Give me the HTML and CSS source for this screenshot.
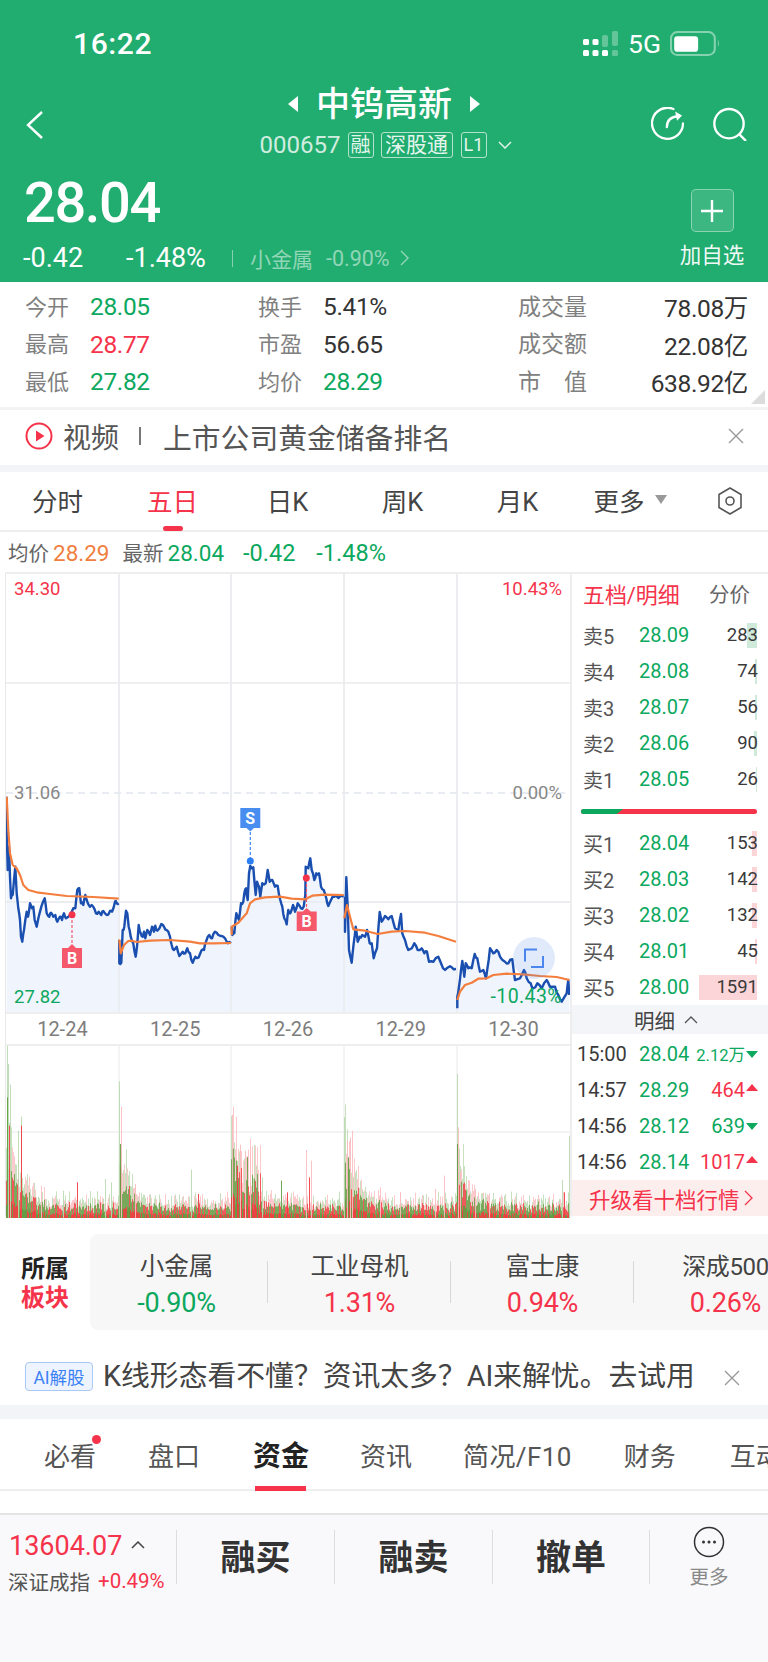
FILE: index.html
```html
<!DOCTYPE html>
<html lang="zh-CN">
<head>
<meta charset="utf-8">
<title>中钨高新</title>
<link rel="stylesheet" href="styles.css">
</head>
<body>
<div class="page">
  <header class="header">
    <div class="status">
      <span class="clock">16:22</span>
      <div class="status-right">
        <svg class="signal" viewBox="0 0 36 26" width="36" height="26">
          <g class="sig-on">
            <rect x="0" y="8" width="6" height="6" rx="1.5"/><rect x="9.5" y="8" width="6" height="6" rx="1.5"/>
            <rect x="0" y="19" width="6" height="6" rx="1.5"/><rect x="9.5" y="19" width="6" height="6" rx="1.5"/><rect x="19" y="19" width="6" height="6" rx="1.5"/>
          </g>
          <g class="sig-off">
            <rect x="19" y="4" width="6" height="12" rx="2"/><rect x="29" y="0" width="6" height="15" rx="2"/><rect x="29" y="19" width="6" height="6" rx="1.5"/>
          </g>
        </svg>
        <span class="net">5G</span>
        <svg class="battery" viewBox="0 0 48 24" width="48" height="24">
          <rect class="bat-shell" x="1" y="1" width="42" height="22" rx="6"/>
          <rect class="bat-fill" x="4" y="5" width="23" height="15" rx="3"/>
          <path class="bat-cap" d="M46 8.5 Q48 12 46 15.5Z"/>
        </svg>
      </div>
    </div>
    <div class="nav">
      <svg class="back" viewBox="0 0 18 28" width="18" height="28"><path d="M16 1 L2 14 L16 27"/></svg>
      <div class="nav-mid">
        <div class="title"><span class="tri-l"></span><span class="name">中钨高新</span><span class="tri-r"></span></div>
        <div class="code">
          <span class="code-num">000657</span>
          <span class="tag">融</span><span class="tag tag-wide">深股通</span><span class="tag tag-l1">L1</span>
          <svg class="code-chev" viewBox="0 0 14 8" width="14" height="8"><path d="M1 1 L7 7 L13 1"/></svg>
        </div>
      </div>
      <div class="nav-icons">
        <svg class="ic" viewBox="272 262 100 100" width="33" height="33"><path d="M340 268 A47 47 0 1 0 369 312"/><path d="M320 323 Q320 292 356 290"/><path class="ic-head" d="M345 276 L366 288 L351 304Z"/></svg>
        <svg class="ic" viewBox="455 262 102 102" width="34" height="34"><circle cx="503" cy="312" r="44"/><path d="M535 345 L552 362"/></svg>
      </div>
    </div>
    <div class="quote">
      <div class="quote-left">
        <div class="price">28.04</div>
        <div class="delta">
          <span class="d1">-0.42</span><span class="d2">-1.48%</span><i class="d-sep"></i>
          <span class="sector-n">小金属</span><span class="sector-v">-0.90%</span>
          <svg class="d-chev" viewBox="0 0 9 16" width="9" height="16"><path d="M1 1 L8 8 L1 15"/></svg>
        </div>
      </div>
      <div class="add">
        <div class="add-btn"><svg viewBox="0 0 24 24" width="24" height="24"><path d="M12 1 V23 M1 12 H23"/></svg></div>
        <span class="add-t">加自选</span>
      </div>
    </div>
  </header>

  <section class="stats">
    <div class="st-col st-c1">
      <div class="st-row"><span class="st-l">今开</span><span class="st-v green">28.05</span></div>
      <div class="st-row"><span class="st-l">最高</span><span class="st-v red">28.77</span></div>
      <div class="st-row"><span class="st-l">最低</span><span class="st-v green">27.82</span></div>
    </div>
    <div class="st-col st-c2">
      <div class="st-row"><span class="st-l">换手</span><span class="st-v">5.41%</span></div>
      <div class="st-row"><span class="st-l">市盈</span><span class="st-v">56.65</span></div>
      <div class="st-row"><span class="st-l">均价</span><span class="st-v green">28.29</span></div>
    </div>
    <div class="st-col st-c3">
      <div class="st-row st-between"><span class="st-l">成交量</span><span class="st-v">78.08万</span></div>
      <div class="st-row st-between"><span class="st-l">成交额</span><span class="st-v">22.08亿</span></div>
      <div class="st-row st-between"><span class="st-l st-just">市 值</span><span class="st-v">638.92亿</span></div>
    </div>
    <i class="corner"></i>
  </section>

  <section class="video">
    <svg class="play" viewBox="0 0 28 28" width="28" height="28"><circle cx="14" cy="14" r="12.5"/><path d="M11 8.5 L19.5 14 L11 19.5Z"/></svg>
    <span class="vid-a">视频</span><i class="vid-sep"></i><span class="vid-b">上市公司黄金储备排名</span>
    <svg class="close" viewBox="0 0 16 16" width="16" height="16"><path d="M1 1 L15 15 M15 1 L1 15"/></svg>
  </section>
  <div class="band band-a"></div>

  <nav class="tabs">
    <span class="tab">分时</span>
    <span class="tab tab-on">五日</span>
    <span class="tab">日K</span>
    <span class="tab">周K</span>
    <span class="tab">月K</span>
    <span class="tab tab-more">更多<i class="caret"></i></span>
    <svg class="hex" viewBox="0 0 26 28" width="26" height="28"><path d="M13 1 L24 7.500 V20.500 L13 27 L2 20.500 V7.500Z"/><circle cx="13" cy="14" r="4"/></svg>
  </nav>

  <div class="info">
    <span class="lab">均价</span><span class="val orange">28.29</span>
    <span class="lab lab-2">最新</span><span class="val green">28.04</span>
    <span class="val green v-3">-0.42</span><span class="val green v-4">-1.48%</span>
  </div>

  <section class="board">
    <div class="charts">
      <div class="price-chart">
        <svg id="price-svg" class="chart-svg" viewBox="6 573 564 439" width="564" height="439">
          <g class="grid">
            <path d="M119 573 V1012 M231 573 V1012 M344 573 V1012 M457 573 V1012 M6 683 H570 M6 902 H570"/>
          </g>
          <path class="zero" d="M6 793 H570"/>
          <g id="price-layer"></g>
          <path class="dash dash-r" d="M72 915 V945"/>
          <path class="flag-r" d="M62 948 H68 L72 944 L76 948 H82 V968 H62Z"/>
          <circle class="dot-r" cx="72" cy="914.700" r="3.500"/>
          <text class="flag-t" x="72" y="964">B</text>
          <path class="dash dash-b" d="M250.300 832 V861"/>
          <path class="flag-b" d="M240.300 808 H260.300 V828 H254 L250.300 831.500 L246.500 828 H240.300Z"/>
          <circle class="dot-b" cx="250.300" cy="861" r="3.500"/>
          <text class="flag-t" x="250.300" y="824">S</text>
          <path class="dash dash-r" d="M306.500 879 V908"/>
          <path class="flag-r" d="M296.700 911.500 H302.700 L306.700 908 L310.700 911.500 H316.700 V931 H296.700Z"/>
          <circle class="dot-r" cx="306.300" cy="878" r="3.500"/>
          <text class="flag-t" x="306.700" y="927">B</text>
          <circle class="expand" cx="534" cy="958" r="21"/>
          <path class="expand-i" d="M525 961.500 V949.500 H537 M543 956 V967 H531"/>
        </svg>
        <span class="ax ax-tl red">34.30</span>
        <span class="ax ax-tr red">10.43%</span>
        <span class="ax ax-ml grey">31.06</span>
        <span class="ax ax-mr grey">0.00%</span>
        <span class="ax ax-bl green">27.82</span>
        <span class="ax ax-br green">-10.43%</span>
      </div>
      <div class="dates">
        <span>12-24</span><span>12-25</span><span>12-26</span><span>12-29</span><span>12-30</span>
      </div>
      <svg id="vol-svg" class="vol-svg" viewBox="6 1045 564 172" width="564" height="172">
        <path class="grid-line" d="M119 1045 V1217 M231 1045 V1217 M344 1045 V1217 M457 1045 V1217 M6 1131 H570"/>
        <g id="vol-layer"></g>
      </svg>
    </div>

    <aside class="book">
      <div class="book-head"><span class="book-title">五档/明细</span><span class="book-alt">分价</span></div>
      <div class="b-row"><span class="b-l">卖5</span><span class="b-p">28.09</span><span class="b-q">283</span><i class="b-bar bar-g" style="width:10px"></i></div>
      <div class="b-row"><span class="b-l">卖4</span><span class="b-p">28.08</span><span class="b-q">74</span><i class="b-bar bar-g" style="width:2px"></i></div>
      <div class="b-row"><span class="b-l">卖3</span><span class="b-p">28.07</span><span class="b-q">56</span><i class="b-bar bar-g" style="width:2px"></i></div>
      <div class="b-row"><span class="b-l">卖2</span><span class="b-p">28.06</span><span class="b-q">90</span><i class="b-bar bar-g" style="width:3px"></i></div>
      <div class="b-row"><span class="b-l">卖1</span><span class="b-p">28.05</span><span class="b-q">26</span><i class="b-bar bar-g" style="width:1px"></i></div>
      <div class="ratio"><i class="ratio-g"></i><i class="ratio-r"></i></div>
      <div class="b-row"><span class="b-l">买1</span><span class="b-p">28.04</span><span class="b-q">153</span><i class="b-bar bar-r" style="width:5px"></i></div>
      <div class="b-row"><span class="b-l">买2</span><span class="b-p">28.03</span><span class="b-q">142</span><i class="b-bar bar-r" style="width:5px"></i></div>
      <div class="b-row"><span class="b-l">买3</span><span class="b-p">28.02</span><span class="b-q">132</span><i class="b-bar bar-r" style="width:5px"></i></div>
      <div class="b-row"><span class="b-l">买4</span><span class="b-p">28.01</span><span class="b-q">45</span><i class="b-bar bar-r" style="width:2px"></i></div>
      <div class="b-row"><span class="b-l">买5</span><span class="b-p">28.00</span><span class="b-q">1591</span><i class="b-bar bar-r" style="width:58px"></i></div>
      <div class="detail-head">明细<svg viewBox="0 0 14 8" width="14" height="8"><path d="M1 7 L7 1 L13 7"/></svg></div>
      <div class="details">
        <div class="d-row"><span class="d-t">15:00</span><span class="d-p">28.04</span><span class="d-q green small">2.12万</span><i class="t-dn"></i></div>
        <div class="d-row"><span class="d-t">14:57</span><span class="d-p">28.29</span><span class="d-q red">464</span><i class="t-up"></i></div>
        <div class="d-row"><span class="d-t">14:56</span><span class="d-p">28.12</span><span class="d-q green">639</span><i class="t-dn"></i></div>
        <div class="d-row"><span class="d-t">14:56</span><span class="d-p">28.14</span><span class="d-q red">1017</span><i class="t-up"></i></div>
      </div>
      <div class="upgrade">升级看十档行情<svg viewBox="0 0 9 16" width="9" height="16"><path d="M1 1 L8 8 L1 15"/></svg></div>
    </aside>
  </section>

  <section class="sectors">
    <div class="sec-title"><span>所属</span><span class="red">板块</span></div>
    <div class="sec-card">
      <div class="sec-item"><span class="sec-n">小金属</span><span class="sec-v green">-0.90%</span></div>
      <div class="sec-item"><span class="sec-n">工业母机</span><span class="sec-v red">1.31%</span></div>
      <div class="sec-item"><span class="sec-n">富士康</span><span class="sec-v red">0.94%</span></div>
      <div class="sec-item sec-last"><span class="sec-n">深成500</span><span class="sec-v red">0.26%</span></div>
    </div>
  </section>

  <section class="ai">
    <span class="ai-badge">AI解股</span>
    <span class="ai-text">K线形态看不懂？资讯太多？AI来解忧。去试用</span>
    <svg class="close" viewBox="0 0 16 16" width="16" height="16"><path d="M1 1 L15 15 M15 1 L1 15"/></svg>
  </section>
  <div class="band band-b"></div>

  <nav class="subtabs">
    <span class="st st-1">必看<i class="st-dot"></i></span>
    <span class="st st-2">盘口</span>
    <span class="st st-3 st-on">资金</span>
    <span class="st st-4">资讯</span>
    <span class="st st-5">简况/F10</span>
    <span class="st st-6">财务</span>
    <span class="st st-7">互动</span>
  </nav>
  <div class="spacer"></div>

  <footer class="foot">
    <div class="idx">
      <div class="idx-top"><span class="idx-num">13604.07</span><svg viewBox="0 0 14 8" width="14" height="8"><path d="M1 7 L7 1 L13 7"/></svg></div>
      <div class="idx-sub"><span class="idx-name">深证成指</span><span class="idx-pct">+0.49%</span></div>
    </div>
    <span class="act">融买</span>
    <span class="act">融卖</span>
    <span class="act">撤单</span>
    <div class="more">
      <svg viewBox="0 0 32 32" width="32" height="32"><circle class="more-c" cx="16" cy="16" r="14.500"/><circle class="more-d" cx="10.500" cy="16" r="1.500"/><circle class="more-d" cx="16" cy="16" r="1.500"/><circle class="more-d" cx="21.500" cy="16" r="1.500"/></svg>
      <span>更多</span>
    </div>
  </footer>
</div>
<script src="script.js"></script>
</body>
</html>
```
FILE: styles.css
```css
* { box-sizing: border-box; margin: 0; padding: 0; }
html, body { background: #fff; }
body { width: 768px; height: 1662px; overflow: hidden; font-family: Roboto, "Noto Sans CJK SC", sans-serif; color: #333; }
i { display: block; font-style: normal; }
svg { display: block; }
.page { width: 768px; height: 1662px; overflow: hidden; display: flex; flex-direction: column; }
.green { color: #0ba85e; }
.red { color: #f5334a; }
.grey { color: #888; }
.orange { color: #f07f3f; }

/* header */
.header { height: 282px; background: #22ad70; color: #fff; flex: none; }
.status { height: 86px; display: flex; justify-content: space-between; align-items: center; padding: 0 48px 0 73px; }
.clock { font-size: 30px; font-weight: 500; letter-spacing: 0.6px; }
.status-right { display: flex; align-items: center; }
.signal { margin-right: 9px; margin-top: 2px; }
.sig-on { fill: #fff; }
.sig-off { fill: rgba(255,255,255,.3); }
.net { font-size: 26.500px; width: 42px; }
.battery { margin-top: 1px; width: 50px; height: 25px; }
.bat-shell { fill: none; stroke: rgba(255,255,255,.45); stroke-width: 2; }
.bat-fill { fill: #fff; }
.bat-cap { fill: rgba(255,255,255,.45); }

.nav { height: 84px; display: grid; grid-template-columns: 1fr auto 1fr; align-items: start; }
.back { margin: 25px 0 0 26px; fill: none; stroke: #fff; stroke-width: 2.4; }
.nav-mid { display: flex; flex-direction: column; align-items: center; }
.title { display: flex; align-items: center; height: 32px; margin-top: 2px; }
.name { font-size: 34px; font-weight: 500; line-height: 32px; margin: 0 18px; }
.tri-l { width: 0; height: 0; border-style: solid; border-width: 8px 10px 8px 0; border-color: transparent #fff transparent transparent; }
.tri-r { width: 0; height: 0; border-style: solid; border-width: 8px 0 8px 10px; border-color: transparent transparent transparent #fff; }
.code { display: flex; align-items: center; height: 26px; margin-top: 12px; color: rgba(255,255,255,.8); margin-left: 3px; }
.code-num { font-size: 24px; width: 88px; }
.tag { border: 1px solid rgba(255,255,255,.65); border-radius: 3px; height: 26px; width: 26px; display: flex; align-items: center; justify-content: center; font-size: 20px; line-height: 1; white-space: nowrap; margin-right: 7px; color: rgba(255,255,255,.9); }
.tag-wide { width: 72px; font-size: 21px; margin-right: 8px; }
.tag-l1 { font-size: 18px; margin-right: 11px; }
.code-chev { fill: none; stroke: rgba(255,255,255,.85); stroke-width: 1.5; }
.nav-icons { display: flex; justify-content: flex-end; gap: 29px; padding: 21px 21px 0 0; }
.ic { fill: none; stroke: #fff; stroke-width: 7; stroke-linecap: round; }
.ic-head { fill: #fff; stroke: none; }

.quote { height: 112px; display: flex; justify-content: space-between; padding: 0 23px 0 23px; }
.price { font-size: 56px; font-weight: 500; line-height: 66px; margin-left: 1px; letter-spacing: -1.4px; }
.delta { display: flex; align-items: center; height: 38px; margin-top: 3px; }
.d1 { font-size: 27px; width: 103px; }
.d2 { font-size: 27px; width: 106px; }
.d-sep { width: 1px; height: 17px; background: rgba(255,255,255,.45); margin-right: 17px; }
.sector-n { font-size: 21px; width: 76px; color: rgba(255,255,255,.5); }
.sector-v { font-size: 21.500px; width: 74px; color: rgba(255,255,255,.5); }
.d-chev { fill: none; stroke: rgba(255,255,255,.5); stroke-width: 1.4; }
.add { display: flex; flex-direction: column; align-items: center; width: 66px; margin-top: 19px; }
.add-btn { width: 43px; height: 43px; border: 1px solid rgba(255,255,255,.4); border-radius: 5px; background: rgba(255,255,255,.12); display: flex; align-items: center; justify-content: center; }
.add-btn path { stroke: #fff; stroke-width: 2.4; }
.add-t { font-size: 21.500px; line-height: 26px; margin-top: 11px; white-space: nowrap; color: rgba(255,255,255,.95); }

/* stats */
.stats { height: 125px; flex: none; display: flex; padding: 6px 0 0 25px; position: relative; }
.st-col { display: flex; flex-direction: column; }
.st-c1 { width: 233px; }
.st-c2 { width: 260px; }
.st-c3 { width: 230px; }
.st-row { height: 37.500px; display: flex; align-items: center; }
.st-between { justify-content: space-between; }
.st-l { font-size: 22px; color: #808080; width: 65px; white-space: nowrap; padding-bottom: 4px; }
.st-c3 .st-l { font-size: 23px; width: 69px; }
.st-just { text-align-last: justify; }
.st-v { font-size: 24.500px; letter-spacing: -0.35px; white-space: nowrap; }
.corner { position: absolute; right: 3px; bottom: 3px; width: 0; height: 0; border-style: solid; border-width: 0 0 14px 14px; border-color: transparent transparent #dcdcdc transparent; }

.video { height: 58px; flex: none; border-top: 3px solid #f3f3f3; display: flex; align-items: center; padding: 0 24px 3px 25px; }
.play { fill: none; stroke: #f5334a; stroke-width: 2; }
.play path { fill: #f5334a; stroke: none; }
.vid-a { font-size: 28px; color: #555; margin-left: 10px; white-space: nowrap; }
.vid-sep { width: 2px; height: 18px; background: #777; margin: 0 22px 0 20px; }
.vid-b { font-size: 28.800px; color: #555; white-space: nowrap; flex: 1; }
.close { fill: none; stroke: #999; stroke-width: 1.4; flex: none; }
.band { background: #f3f4f8; flex: none; }
.band-a { height: 7px; }
.band-b { height: 14px; }

.tabs { height: 60px; flex: none; display: flex; align-items: center; border-bottom: 2px solid #eee; }
.tab { width: 115px; font-size: 25.500px; color: #444; display: flex; justify-content: center; align-items: center; position: relative; height: 100%; white-space: nowrap; padding-bottom: 3px; }
.tab-on { color: #f5334a; }
.tab-on::after { content: ""; position: absolute; left: 48px; bottom: -1px; width: 20px; height: 5px; border-radius: 3px; background: #f5334a; }
.tab-more { padding-right: 5px; }
.caret { width: 0; height: 0; border-style: solid; border-width: 9px 6.500px 0 6.500px; border-color: #999 transparent transparent transparent; margin-left: 10px; }
.hex { margin-left: 27px; fill: none; stroke: #555; stroke-width: 1.6; stroke-linejoin: round; }

.info { height: 41px; flex: none; display: flex; align-items: center; padding-left: 8px; }
.lab { font-size: 20.500px; color: #666; white-space: nowrap; padding-bottom: 2px; }
.lab-2 { margin-left: 13px; }
.val { font-size: 22.500px; margin-left: 4px; white-space: nowrap; }
.v-3 { margin-left: 19px; font-size: 23.500px; }
.v-4 { margin-left: 21px; font-size: 23.500px; }

/* board */
.board { height: 644px; flex: none; display: flex; border-top: 2px solid #eee; margin-top: -1px; margin-left: 5px; }
.charts { width: 565px; flex: none; border-left: 1px solid #e8e8e8; }
.price-chart { position: relative; width: 564px; height: 438px; overflow: hidden; }
.chart-svg { margin-top: -1px; }
.grid { fill: none; stroke: #ececec; stroke-width: 1.5; }
.grid-line { fill: none; stroke: #e8e8e8; stroke-width: 1; }
.zero { fill: none; stroke: #d2dae6; stroke-width: 1; stroke-dasharray: 7 5; }
.area { fill: #eff4fd; stroke: none; }
.p-line { fill: none; stroke: #1a4fb0; stroke-width: 2.400; stroke-linejoin: round; }
.a-line { fill: none; stroke: #f47e3e; stroke-width: 2.200; stroke-linejoin: round; }
.dash { stroke-width: 1.2; stroke-dasharray: 3 2; fill: none; }
.dash-r { stroke: #f5566a; }
.dash-b { stroke: #3b87f5; }
.flag-r { fill: #f4586a; }
.flag-b { fill: #4a8df0; }
.dot-r { fill: #f5334a; }
.dot-b { fill: #2b7ff3; }
.flag-t { fill: #fff; font-size: 16px; font-weight: 700; text-anchor: middle; }
.expand { fill: rgba(90,140,235,.18); }
.expand-i { fill: none; stroke: #4a86ee; stroke-width: 2; }
.ax { position: absolute; font-size: 18.500px; line-height: 20px; white-space: nowrap; }
.ax-tl { left: 8px; top: 5px; }
.ax-tr { right: 8px; top: 5px; }
.ax-ml { left: 8px; top: 209px; }
.ax-mr { right: 8px; top: 209px; }
.ax-bl { left: 8px; top: 413px; }
.ax-br { right: 8px; top: 413px; font-size: 19.500px; letter-spacing: 0.4px; }

.dates { height: 34px; display: grid; grid-template-columns: repeat(5, 112.800px); align-items: center; justify-items: center; border-top: 2px solid #eee; border-bottom: 2px solid #eee; font-size: 20px; color: #7d7d7d; width: 564px; padding-bottom: 1px; }
.vol-svg { margin-bottom: 0; }

.book { width: 198px; flex: none; border-left: 2px solid #eee; }
.book-head { height: 43px; display: flex; justify-content: space-between; align-items: center; padding: 0 18px 6px 11px; }
.book-title { font-size: 22px; color: #f5334a; white-space: nowrap; letter-spacing: -0.1px; }
.book-alt { font-size: 20.500px; color: #666; white-space: nowrap; }
.b-row { height: 36px; display: flex; align-items: center; padding: 0 10px 0 11px; position: relative; }
.b-l { width: 56px; font-size: 20px; color: #555; white-space: nowrap; position: relative; }
.b-p { font-size: 20px; width: 50px; color: #0ba85e; position: relative; }
.b-q { flex: 1; text-align: right; font-size: 18.500px; color: #3a3a3a; position: relative; z-index: 1; }
.b-bar { position: absolute; right: 11px; top: 5.500px; height: 25px; }
.bar-g { background: #cfeadb; }
.bar-r { background: #fbd5d8; }
.ratio { display: flex; height: 5px; margin: 12px 11px 11px 9px; border-radius: 3px; overflow: hidden; background: #f5334a; }
.ratio-g { width: 42px; background: #0ba85e; clip-path: polygon(0 0, 100% 0, 85% 100%, 0 100%); }
.ratio-r { flex: 1; }
.detail-head { height: 29px; background: #f3f5f9; display: flex; align-items: center; justify-content: center; gap: 9px; font-size: 20.500px; color: #444; padding-right: 8px; }
.detail-head path { fill: none; stroke: #555; stroke-width: 1.3; }
.details { padding-top: 2px; }
.d-row { height: 36px; display: flex; align-items: center; padding: 0 10px 0 5px; position: relative; }
.d-t { font-size: 20px; color: #3a3a3a; width: 62px; }
.d-p { font-size: 20px; color: #0ba85e; width: 50px; }
.d-q { flex: 1; text-align: right; font-size: 20px; margin-right: 1px; white-space: nowrap; }
.small { font-size: 16.500px; }
.t-dn { width: 0; height: 0; border-style: solid; border-width: 7px 6.500px 0 6.500px; border-color: #0ba85e transparent transparent transparent; }
.t-up { width: 0; height: 0; border-style: solid; border-width: 0 6.500px 7px 6.500px; border-color: transparent transparent #f5334a transparent; margin-bottom: 6px; }
.upgrade { height: 36px; background: #fdeeee; color: #f5334a; font-size: 21.500px; display: flex; align-items: center; gap: 4px; padding-left: 17px; white-space: nowrap; }
.upgrade path { fill: none; stroke: #f5334a; stroke-width: 1.3; }

/* sectors */
.sectors { height: 115px; flex: none; display: flex; padding-top: 18px; }
.sec-title { width: 90px; flex: none; display: flex; flex-direction: column; align-items: flex-start; padding: 21px 0 0 21px; font-size: 24px; font-weight: 700; line-height: 29px; color: #222; }
.sec-title .red { color: #f5334a; }
.sec-card { flex: 1; height: 96px; background: #f7f7f7; border-radius: 8px 0 0 8px; display: flex; padding-top: 15px; overflow: hidden; }
.sec-item { width: 183px; flex: none; height: 72px; display: flex; flex-direction: column; align-items: center; position: relative; }
.sec-item:first-child { margin-left: -5px; }
.sec-item::after { content: ""; position: absolute; right: 0; top: 12px; height: 42px; width: 1px; background: #d8d8d8; }
.sec-last::after { display: none; }
.sec-n { font-size: 24.500px; color: #444; line-height: 36px; white-space: nowrap; }
.sec-last .sec-n { font-size: 24px; letter-spacing: -0.4px; }
.sec-v { font-size: 27px; line-height: 36px; white-space: nowrap; letter-spacing: -0.2px; }

.ai { height: 74px; flex: none; display: flex; align-items: flex-start; padding: 31px 28px 0 25px; }
.ai-badge { width: 68px; height: 29px; flex: none; border: 1px solid #a9c8f5; border-radius: 4px; background: #eef4fe; color: #3b82f6; font-size: 17.500px; display: flex; align-items: center; justify-content: center; white-space: nowrap; }
.ai-text { font-size: 28.800px; color: #444; line-height: 29px; margin-left: 10px; flex: 1; white-space: nowrap; }
.ai .close { margin-top: 8px; }

/* subtabs */
.subtabs { height: 72px; flex: none; border-bottom: 2px solid #eee; display: flex; align-items: center; position: relative; white-space: nowrap; }
.st { font-size: 26px; color: #555; position: relative; flex: none; }
.st-1 { margin-left: 44px; }
.st-2 { margin-left: 52px; }
.st-3 { margin-left: 53px; font-size: 28px; font-weight: 700; color: #222; }
.st-3::after { content: ""; position: absolute; left: 2px; right: 3px; bottom: -17px; height: 5px; background: #f5334a; }
.st-4 { margin-left: 51px; }
.st-5 { margin-left: 51px; letter-spacing: 0.4px; }
.st-6 { margin-left: 52px; }
.st-7 { margin-left: 54px; }
.st-dot { position: absolute; width: 9px; height: 9px; border-radius: 50%; background: #f5334a; right: -5px; top: -1px; }
.spacer { height: 22px; flex: none; }

/* footer */
.foot { flex: 1; background: #f9f9fb; border-top: 2px solid #e4e4e4; display: flex; align-items: flex-start; padding-top: 15px; }
.idx { width: 177px; height: 54px; flex: none; border-right: 1px solid #ddd; padding-left: 9px; }
.idx-top { display: flex; align-items: center; height: 32px; }
.idx-num { font-size: 27px; color: #f5334a; }
.idx-top svg { margin-left: 9px; margin-bottom: 3px; fill: none; stroke: #444; stroke-width: 1.500; }
.idx-sub { display: flex; align-items: center; height: 34px; margin-left: -1px; margin-top: 2px; white-space: nowrap; }
.idx-name { font-size: 20.500px; color: #555; }
.idx-pct { font-size: 20.500px; color: #f5334a; margin-left: 8px; }
.act { width: 158px; height: 54px; flex: none; border-right: 1px solid #ddd; display: flex; align-items: center; justify-content: center; font-size: 35px; font-weight: 700; color: #333; padding-bottom: 6px; }
.act:nth-of-type(3) { width: 157px; }
.more { flex: 1; display: flex; flex-direction: column; align-items: center; margin-top: -4px; padding-right: 0; }
.more-c { fill: none; stroke: #333; stroke-width: 1.5; }
.more-d { fill: #333; }
.more span { font-size: 19.500px; color: #888; line-height: 24px; margin-top: 8px; }
```
FILE: script.js
```js
(function () {
  var NS = 'http://www.w3.org/2000/svg';
  var seed = 11;
  function rnd() { seed = (seed * 16807) % 2147483647; return seed / 2147483647; }
  function el(name, attrs, parent) {
    var n = document.createElementNS(NS, name);
    for (var k in attrs) n.setAttribute(k, attrs[k]);
    parent.appendChild(n);
    return n;
  }

  // Five days of intraday data, traced per day: [x, y] in a crop at offset (ox, oy), 3x scale.
  var days = [
    { ox: 0, oy: 780,
      p: [[20,50],[20,150],[23,270],[27,200],[30,290],[33,355],[38,345],[42,300],[46,260],[50,340],[55,385],[60,420],[63,470],[67,485],[72,450],[76,420],[80,395],[84,410],[90,370],[96,385],[100,380],[104,420],[110,440],[116,410],[124,380],[134,355],[140,400],[148,410],[153,398],[160,410],[166,405],[172,425],[180,410],[186,420],[192,400],[198,415],[210,405],[220,385],[226,385],[232,330],[238,325],[243,370],[250,375],[256,345],[262,365],[270,380],[280,380],[288,400],[296,395],[304,405],[310,393],[320,405],[330,393],[336,395],[345,365],[350,370],[356,370]],
      a: [[20,50],[25,150],[30,220],[38,255],[50,265],[60,285],[70,315],[85,330],[110,337],[150,342],[200,348],[280,351],[356,356]] },
    { ox: 0, oy: 780,
      p: [[358,480],[358,550],[364,548],[368,450],[373,440],[378,392],[382,400],[386,440],[392,470],[400,490],[407,530],[412,490],[416,435],[422,460],[428,470],[432,455],[436,475],[442,450],[450,465],[456,440],[462,455],[466,437],[472,452],[484,432],[492,440],[500,450],[510,470],[515,495],[522,510],[530,500],[538,528],[548,515],[556,520],[562,505],[570,520],[578,548],[586,530],[596,532],[604,512],[612,510],[618,485],[628,465],[636,475],[645,455],[655,465],[665,468],[675,475],[683,490],[693,490]],
      a: [[358,478],[362,520],[372,495],[385,483],[395,482],[410,486],[450,482],[510,480],[570,485],[600,490],[640,490],[693,489]] },
    { ox: 225, oy: 780,
      p: [[20,440],[22,465],[28,460],[34,400],[42,420],[48,370],[55,365],[58,340],[63,325],[68,360],[72,280],[76,258],[85,262],[92,345],[96,305],[102,320],[106,350],[112,310],[122,310],[128,270],[134,305],[142,300],[150,320],[158,318],[166,360],[172,380],[178,415],[185,433],[190,390],[196,400],[204,375],[210,395],[218,370],[228,385],[236,380],[241,345],[242,260],[250,265],[256,235],[260,270],[268,300],[274,280],[282,280],[288,320],[296,330],[304,355],[310,378],[318,360],[328,350],[340,354],[356,350]],
      a: [[20,465],[20,440],[40,428],[65,400],[75,370],[90,358],[120,352],[165,350],[200,356],[240,358],[262,347],[300,344],[356,345]] },
    { ox: 225, oy: 780,
      p: [[360,350],[360,455],[364,292],[368,380],[372,510],[380,548],[386,490],[392,440],[398,485],[404,470],[412,465],[420,470],[426,450],[434,490],[440,490],[446,535],[456,505],[464,396],[470,425],[480,408],[490,418],[500,408],[510,445],[520,450],[528,402],[532,460],[540,480],[550,510],[560,505],[568,490],[578,510],[590,505],[598,520],[606,515],[612,545],[625,545],[640,530],[648,550],[660,570],[670,562],[680,562],[693,567]],
      a: [[358,415],[366,375],[375,410],[385,448],[420,452],[458,462],[500,455],[540,453],[600,458],[640,468],[693,485]] },
    { ox: 400, oy: 880,
      p: [[172,385],[172,350],[177,320],[183,270],[187,243],[193,290],[197,250],[205,265],[215,265],[224,222],[232,235],[240,275],[250,270],[258,295],[266,240],[270,205],[280,220],[290,210],[300,230],[315,245],[325,250],[337,238],[345,300],[360,295],[372,270],[380,295],[392,310],[400,325],[412,310],[425,325],[440,300],[450,320],[465,320],[475,345],[485,365],[500,340],[505,300],[508,345]],
      a: [[172,360],[180,335],[195,315],[215,308],[235,296],[260,295],[280,285],[320,281],[370,283],[420,288],[470,291],[508,300]] }
  ];

  function real(d, list) {
    return list.map(function (q) { return [d.ox + q[0] / 3, d.oy + q[1] / 3]; });
  }
  function jag(pts) {
    var out = [];
    pts.forEach(function (q, i) {
      out.push(q);
      var n = pts[i + 1];
      if (n && n[0] - q[0] > 1.6) {
        out.push([(q[0] + n[0]) / 2, (q[1] + n[1]) / 2 + (rnd() - 0.5) * 3.4]);
      }
    });
    return out;
  }
  function str(pts) {
    return pts.map(function (q) { return q[0].toFixed(1) + ',' + q[1].toFixed(1); }).join(' ');
  }

  var layer = document.getElementById('price-layer');
  days.forEach(function (d) {
    var line = jag(real(d, d.p));
    var first = line[0][0], last = line[line.length - 1][0];
    el('polygon', { 'class': 'area', points: first + ',1012 ' + str(line) + ' ' + last + ',1012' }, layer);
  });
  // The grid has to show through the fill, so redraw it lightly on top of the area.
  el('path', { d: 'M119 573 V1012 M231 573 V1012 M344 573 V1012 M457 573 V1012 M6 902 H570', fill: 'none', stroke: '#e9ebef', 'stroke-width': 1.5 }, layer);
  seed = 11;
  days.forEach(function (d) {
    el('polyline', { 'class': 'p-line', points: str(jag(real(d, d.p))) }, layer);
  });
  days.forEach(function (d) {
    el('polyline', { 'class': 'a-line', points: str(real(d, d.a)) }, layer);
  });

  // Volume bars. Spikes read from the reference: [x, top y, colour] in crop pixels.
  var vol = document.getElementById('vol-layer');
  var base = 1217;
  var starts = [6, 119, 231, 344, 457];
  var ends = [119, 231, 344, 457, 570];
  var amp = [78, 46, 56, 62, 46];
  var COL = { gL: '#b9d9af', rL: '#fbbcc0', g: '#5f9c40', r: '#f23a40' };
  function bar(x, h, c, o) {
    el('rect', { x: x, y: base - h, width: 1, height: h, fill: c, 'fill-opacity': o }, vol);
  }
  seed = 23;
  starts.forEach(function (s, di) {
    for (var x = s; x < ends[di]; x++) {
      var t = x - s;
      var env = 7 + rnd() * 9 + amp[di] * Math.exp(-t / 11) * (0.5 + rnd() * 0.7);
      var mid = (di === 2 && t < 30) ? 26 * rnd() : 0;
      var up = rnd() > 0.5;
      bar(x, (env + mid) * (1.15 + rnd() * 0.6), up ? COL.rL : COL.gL, 0.8);
      var deep = (env + mid) * (0.7 + rnd() * 0.35);
      bar(x, deep, rnd() > 0.45 ? COL.g : COL.r, 0.8);
      bar(x, deep * 0.35, rnd() > 0.5 ? COL.r : COL.g, 0.85);
    }
  });
  var z = 2.75, zb = 622;
  [[19,105,'gL'],[22,160,'gL'],[20,260,'g'],[28,222,'gL'],[24,345,'r'],[58,318,'gL'],[58,345,'r'],[50,360,'gL'],[113,525,'rL'],[172,540,'gL'],[213,515,'r'],[290,505,'gL'],[305,515,'gL'],
   [328,212,'gL'],[334,288,'rL'],[330,400,'g'],[525,477,'gL'],[545,550,'r'],[370,520,'rL'],
   [637,312,'rL'],[660,402,'rL'],[673,420,'rL'],[688,408,'rL'],[652,465,'r'],[680,440,'g'],[720,500,'gL'],[773,510,'g'],[790,545,'r'],[842,418,'rL'],[855,450,'rL'],[850,500,'r'],
   [947,320,'gL'],[953,388,'rL'],[962,380,'rL'],[968,360,'rL'],[958,440,'g'],[1045,530,'rL'],[1100,545,'rL'],[1195,535,'rL'],[1220,495,'rL'],
   [1258,190,'gL'],[1259,350,'rL'],[1257,400,'g'],[1265,483,'rL'],[1305,535,'rL'],[1345,548,'rL'],[1545,508,'gL'],[1565,375,'gL'],[1550,545,'r']
  ].forEach(function (s) {
    bar(Math.round(s[0] / z), (zb - s[1]) / 3, COL[s[2]], 0.9);
  });
})();
```
